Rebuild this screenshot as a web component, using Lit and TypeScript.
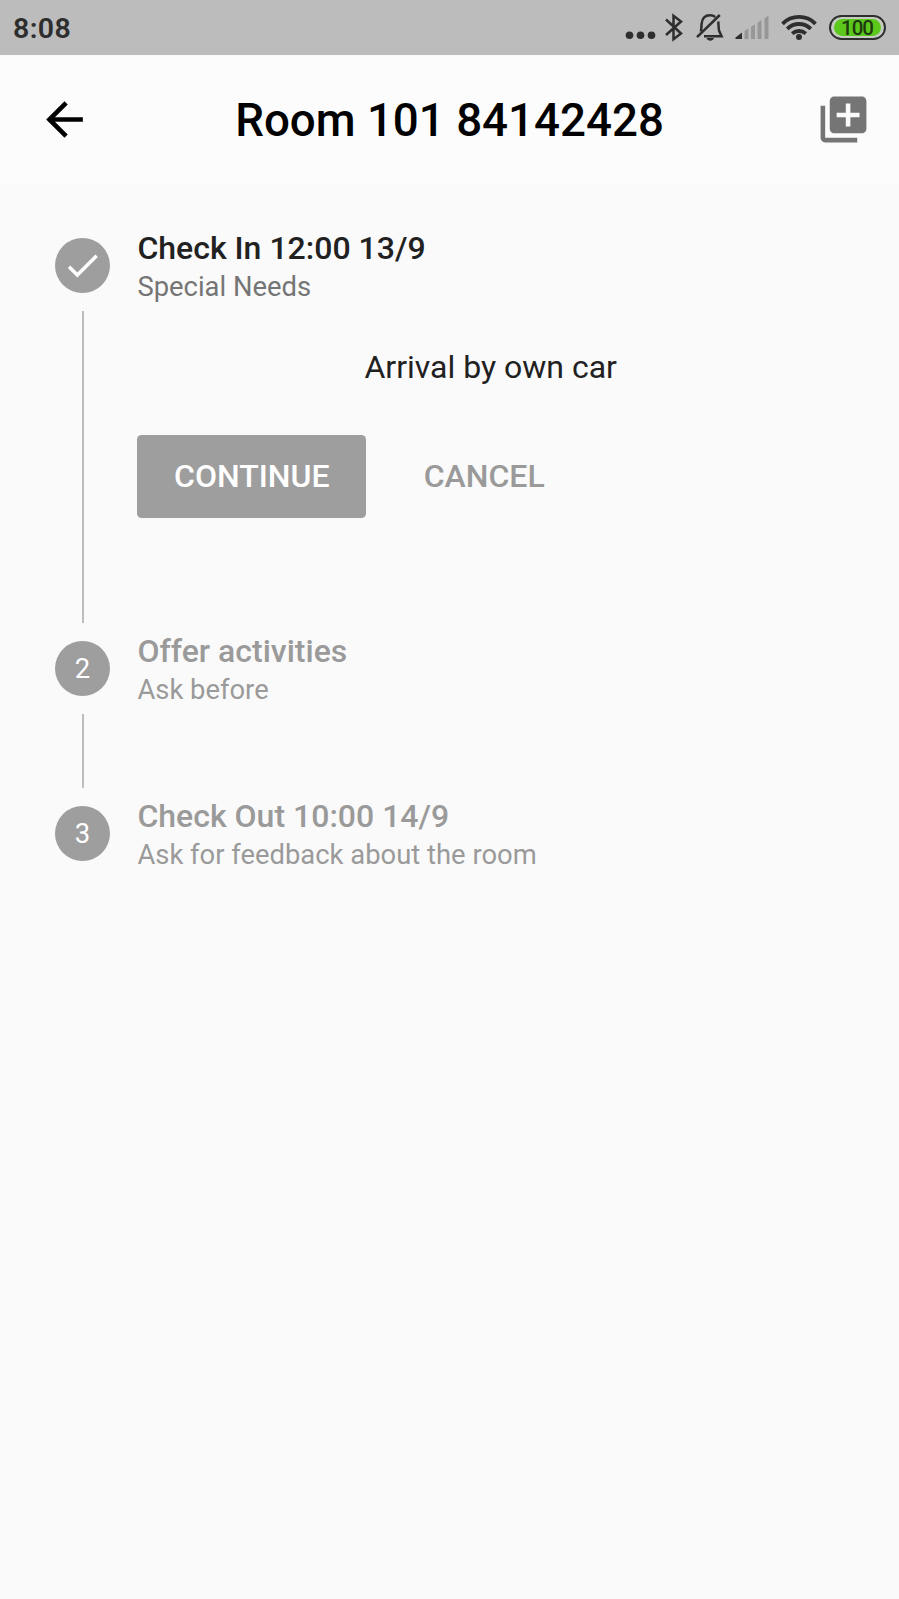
import { LitElement, css, html, nothing, svg } from 'lit';
import { customElement, property } from 'lit/decorators.js';
import { classMap } from 'lit/directives/class-map.js';

@customElement('status-bar')
export class StatusBar extends LitElement {
  static styles = css`
    :host {
      display: flex;
      align-items: center;
      justify-content: space-between;
      box-sizing: border-box;
      height: 55px;
      padding: 0 13px;
      background: #bcbcbc;
      color: #2e2e2e;
    }

    .time {
      padding-top: 2px;
      font-size: 28.5px;
      line-height: 32px;
      font-weight: 600;
      letter-spacing: 0.4px;
    }

    .icons {
      display: flex;
      align-items: center;
    }

    svg {
      display: block;
      height: 55px;
    }

    .dots {
      width: 31px;
      margin-right: 9px;
    }

    .bluetooth {
      width: 19px;
      margin-right: 12px;
    }

    .bell {
      width: 28px;
      margin-right: 11px;
    }

    .signal {
      width: 34px;
      margin-right: 12px;
    }

    .wifi {
      width: 36px;
      margin-right: 12px;
    }

    .battery {
      box-sizing: border-box;
      width: 57px;
      height: 25px;
      padding: 2px 3px;
      border: 2px solid #2e2e2e;
      border-radius: 13px;
      background: #c4ccc0;
    }

    .level {
      height: 17px;
      border-radius: 9px;
      background: #5cc81c;
      color: #1d3a10;
      font-size: 20.5px;
      line-height: 18px;
      font-weight: 500;
      letter-spacing: -1px;
      text-indent: -1px;
      text-align: center;
    }
  `;

  protected render() {
    return html`
      <span class="time">8:08</span>
      <div class="icons">
        <svg class="dots" viewBox="0 0 31 55" fill="#2e2e2e">
          <circle cx="4.5" cy="35.3" r="3.8" />
          <circle cx="15.5" cy="35.3" r="3.8" />
          <circle cx="26.5" cy="35.3" r="3.8" />
        </svg>
        <svg class="bluetooth" viewBox="0 0 19 55" fill="none" stroke="#2e2e2e" stroke-width="2.5">
          <path d="M1 19.5 L16 33.5 L8.5 39.3 V15.7 L16 21.5 L1 35" />
        </svg>
        <svg class="bell" viewBox="0 0 28 55" fill="none" stroke="#2e2e2e" stroke-width="2.5">
          <path d="M4.8 31.5 C5.5 29 5.3 26.5 5.6 23.8 C6.2 18 9.5 15.3 14 15.3 C16 15.3 17.8 15.8 19.2 17" />
          <path d="M22.2 21.5 C22.8 25 22.3 28.5 23.2 31 L25.6 36.2 H8" />
          <path d="M23.8 15 L1 37.2" />
          <path d="M10.5 38 H18 C17 41.6 11.5 41.6 10.5 38 Z" fill="#2e2e2e" stroke="none" />
        </svg>
        <svg class="signal" viewBox="0 0 34 55" fill="#979797">
          <path d="M0.5 39 V37.5 L7 32.5 V39 Z" fill="#2e2e2e" />
          <path d="M9.5 39 V31 L13.5 28.2 V39 Z" />
          <path d="M16 39 V27 L20 24.2 V39 Z" />
          <path d="M22.5 39 V23 L26.5 20 V39 Z" />
          <path d="M29.5 39 V18.5 L33.5 15.5 V39 Z" />
        </svg>
        <svg class="wifi" viewBox="0 0 36 55" fill="none" stroke="#2e2e2e" stroke-width="3.8">
          <path d="M1.5 23.8 C10.5 14.6 25.5 14.6 34.5 23.8" />
          <path d="M6.2 28.8 C13 22.4 23 22.4 29.8 28.8" />
          <path d="M11.2 33.6 C15.2 30.1 20.8 30.1 24.8 33.6" />
          <circle cx="18" cy="37" r="3" fill="#2e2e2e" stroke="none" />
        </svg>
        <div class="battery"><div class="level">100</div></div>
      </div>
    `;
  }
}

@customElement('app-bar')
export class AppBar extends LitElement {
  static styles = css`
    :host {
      display: grid;
      grid-template-columns: 128px 1fr 128px;
      align-items: center;
      height: 128px;
      background: #fcfcfc;
    }

    h1 {
      margin: 0;
      padding-top: 3px;
      color: #000;
      font-size: 45.7px;
      line-height: 54px;
      font-weight: 500;
      text-align: center;
      white-space: nowrap;
    }

    button {
      all: unset;
      display: flex;
    }

    svg {
      width: 55px;
      height: 55px;
    }

    .back {
      padding-left: 36.6px;
    }

    .add {
      padding-right: 27.6px;
      justify-content: flex-end;
    }
  `;

  @property() heading = '';

  protected render() {
    return html`
      <button class="back" aria-label="Back">
        <svg viewBox="0 0 24 24">
          <path d="M20 11H7.83l5.59-5.59L12 4l-8 8 8 8 1.41-1.41L7.83 13H20v-2z" />
        </svg>
      </button>
      <h1>${this.heading}</h1>
      <button class="add" aria-label="Add">
        <svg viewBox="0 0 24 24" fill="#757575">
          <path
            d="M4 6H2v14c0 1.1.9 2 2 2h14v-2H4V6zm16-4H8c-1.1 0-2 .9-2 2v12c0 1.1.9 2 2 2h12c1.1 0 2-.9 2-2V4c0-1.1-.9-2-2-2zm-1 9h-4v4h-2v-4H9V9h4V5h2v4h4v2z"
          />
        </svg>
      </button>
    `;
  }
}

/**
 * One step of the vertical stepper. Slotted content is shown below the header.
 */
@customElement('stepper-step')
export class StepperStep extends LitElement {
  static styles = css`
    :host {
      display: grid;
      grid-template-columns: 55px 1fr;
      column-gap: 27.4px;
      min-height: 165px;
      padding: 0 55px;
    }

    .rail {
      display: flex;
      flex-direction: column;
      align-items: center;
      gap: 18px;
    }

    .line {
      width: 2px;
      background: #bdbdbd;
    }

    .before {
      height: 37px;
    }

    .after {
      flex: 1;
    }

    .hidden {
      visibility: hidden;
    }

    .marker {
      display: flex;
      align-items: center;
      justify-content: center;
      width: 55px;
      height: 55px;
      border-radius: 50%;
      background: #9e9e9e;
      color: #fff;
      font-size: 27.5px;
      line-height: 32px;
    }

    .marker svg {
      width: 41px;
      height: 41px;
    }

    header {
      display: flex;
      flex-direction: column;
      justify-content: center;
      gap: 2px;
      box-sizing: border-box;
      height: 165px;
      padding-top: 2px;
      color: #9a9a9a;
    }

    h2 {
      margin: 0;
      font-size: 32px;
      line-height: 38px;
      font-weight: 500;
    }

    p {
      margin: 0;
      font-size: 27.4px;
      line-height: 36px;
    }

    .active h2 {
      color: #212121;
    }

    .active p {
      color: #757575;
    }
  `;

  @property({ type: Number }) index = 1;
  @property() heading = '';
  @property() subtitle = '';
  @property({ type: Boolean }) active = false;
  @property({ type: Boolean }) first = false;
  @property({ type: Boolean }) last = false;

  private renderMarker() {
    return this.active
      ? html`<svg viewBox="0 0 24 24" fill="#fff">
          ${svg`<path d="M9 16.17L4.83 12l-1.42 1.41L9 19 21 7l-1.41-1.41z" />`}
        </svg>`
      : this.index;
  }

  protected render() {
    return html`
      <div class="rail">
        <div class=${classMap({ line: true, before: true, hidden: this.first })}></div>
        <div class="marker">${this.renderMarker()}</div>
        ${this.last ? nothing : html`<div class="line after"></div>`}
      </div>
      <div class=${classMap({ active: this.active })}>
        <header>
          <h2>${this.heading}</h2>
          <p>${this.subtitle}</p>
        </header>
        <slot></slot>
      </div>
    `;
  }
}

@customElement('app-root')
export class AppRoot extends LitElement {
  static styles = css`
    :host {
      display: block;
      min-height: 1599px;
      background: #fafafa;
      font-family: Roboto, 'Liberation Sans', sans-serif;
    }

    .note {
      margin: 0;
      color: #212121;
      font-size: 32px;
      line-height: 38px;
      text-align: center;
    }

    .actions {
      display: flex;
      gap: 21px;
      padding: 49px 0 68px;
    }

    .actions button {
      all: unset;
      box-sizing: border-box;
      height: 83px;
      padding: 0 36.6px;
      border-radius: 4.6px;
      color: #9a9a9a;
      font-size: 32px;
      line-height: 83px;
      font-weight: 500;
    }

    .actions .primary {
      background: #9e9e9e;
      color: #fff;
    }
  `;

  protected render() {
    return html`
      <status-bar></status-bar>
      <app-bar heading="Room 101 84142428"></app-bar>
      <stepper-step index="1" heading="Check In 12:00 13/9" subtitle="Special Needs" active first>
        <p class="note">Arrival by own car</p>
        <div class="actions">
          <button class="primary">CONTINUE</button>
          <button>CANCEL</button>
        </div>
      </stepper-step>
      <stepper-step index="2" heading="Offer activities" subtitle="Ask before"></stepper-step>
      <stepper-step
        index="3"
        heading="Check Out 10:00 14/9"
        subtitle="Ask for feedback about the room"
        last
      ></stepper-step>
    `;
  }
}
